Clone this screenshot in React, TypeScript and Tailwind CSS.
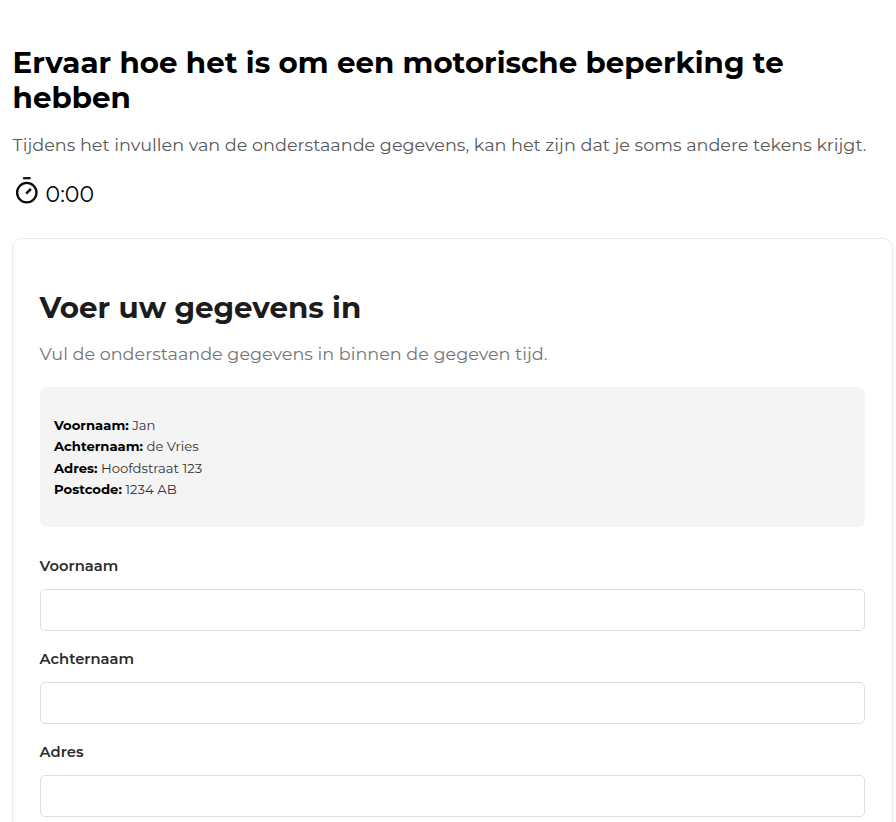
const details = [
  { label: 'Voornaam:', value: 'Jan' },
  { label: 'Achternaam:', value: 'de Vries' },
  { label: 'Adres:', value: 'Hoofdstraat 123' },
  { label: 'Postcode:', value: '1234 AB' },
];

const fields = ['Voornaam', 'Achternaam', 'Adres'];

function StopwatchIcon() {
  return (
    <svg width="30" height="30" viewBox="0 0 30 30" fill="none" stroke="#0a0a0a" aria-hidden="true">
      <circle cx="13.8" cy="16.6" r="9.7" strokeWidth="2.3" />
      <path d="M10.1 2.2h7.4" strokeWidth="2.2" />
      <path d="M13.2 17.6l4.7-4.7" strokeWidth="2.5" />
    </svg>
  );
}

export default function App() {
  return (
    <main className="h-[822px] overflow-hidden bg-white pl-3 pr-[3px] pt-[45px] font-['Montserrat','Inter',sans-serif]">
      <header className="pl-[0.6px]">
        <h1 className="text-[29.35px] font-bold leading-[35.2px] text-black">
          <span className="block whitespace-nowrap">Ervaar hoe het is om een motorische beperking te</span>
          <span className="block whitespace-nowrap">hebben</span>
        </h1>
        <p className="mt-[16px] whitespace-nowrap text-[17.62px] leading-[27px] text-[#595959]">
          Tijdens het invullen van de onderstaande gegevens, kan het zijn dat je soms andere tekens krijgt.
        </p>
        <div className="mt-[18px] flex h-[36px] text-[22px] leading-[37px] text-black">
          <StopwatchIcon />
          <span className="ml-[3px]">0:00</span>
        </div>
      </header>

      <section className="mt-[25.6px] h-[640px] rounded-[10px] border border-[#ebebeb] pl-[26.6px] pr-[26.6px] pt-[51px]">
        <h2 className="whitespace-nowrap text-[29.35px] font-bold leading-9 text-[#1c1c1c]">Voer uw gegevens in</h2>
        <p className="mt-[14px] whitespace-nowrap text-[17.6px] leading-[27px] text-[#757575]">
          Vul de onderstaande gegevens in binnen de gegeven tijd.
        </p>
        <div className="mt-[20px] h-[139.5px] rounded-[7px] bg-[#f4f4f4] pl-[14.4px] pt-[28px] text-[13.2px] leading-[21.4px]">
          {details.map((item) => (
            <div key={item.label} className="whitespace-nowrap text-[#333]">
              <strong className="font-bold text-black">{item.label}</strong> {item.value}
            </div>
          ))}
        </div>
        <form className="mt-[27.5px] flex flex-col gap-[16px]">
          {fields.map((label) => (
            <label key={label} className="block">
              <span className="block text-[14.75px] font-semibold leading-6 text-[#2b2b2b]">{label}</span>
              <input
                type="text"
                className="mt-[11px] block h-[42px] w-full rounded-[5px] border border-[#dedede] bg-white px-3"
              />
            </label>
          ))}
        </form>
      </section>
    </main>
  );
}
